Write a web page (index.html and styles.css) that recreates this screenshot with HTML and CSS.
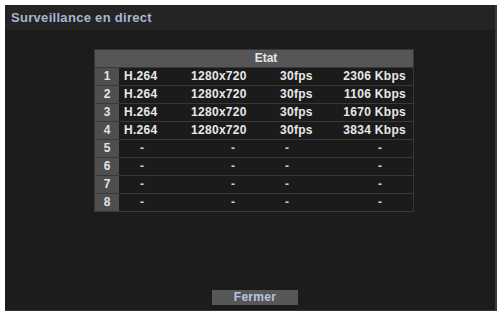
FILE: index.html
```html
<!DOCTYPE html>
<html lang="fr">
<head>
  <meta charset="UTF-8" />
  <title>Surveillance en direct</title>
  <link rel="stylesheet" href="styles.css">
</head>
<body>
  <div class="screen">
    <div class="titlebar">Surveillance en direct</div>

    <div class="content">
      <div class="status-table">
        <div class="head">Etat</div>

        <div class="row">
          <div class="idx">1</div>
          <div class="data">
            <span class="c1">H.264</span><span class="c2">1280x720</span><span class="c3">30fps</span><span class="c4">2306 Kbps</span>
          </div>
        </div>
        <div class="row">
          <div class="idx">2</div>
          <div class="data">
            <span class="c1">H.264</span><span class="c2">1280x720</span><span class="c3">30fps</span><span class="c4">1106 Kbps</span>
          </div>
        </div>
        <div class="row">
          <div class="idx">3</div>
          <div class="data">
            <span class="c1">H.264</span><span class="c2">1280x720</span><span class="c3">30fps</span><span class="c4">1670 Kbps</span>
          </div>
        </div>
        <div class="row">
          <div class="idx">4</div>
          <div class="data">
            <span class="c1">H.264</span><span class="c2">1280x720</span><span class="c3">30fps</span><span class="c4">3834 Kbps</span>
          </div>
        </div>

        <div class="row empty">
          <div class="idx">5</div>
          <div class="data"><span class="c1">-</span><span class="c2">-</span><span class="c3">-</span><span class="c4">-</span></div>
        </div>
        <div class="row empty">
          <div class="idx">6</div>
          <div class="data"><span class="c1">-</span><span class="c2">-</span><span class="c3">-</span><span class="c4">-</span></div>
        </div>
        <div class="row empty">
          <div class="idx">7</div>
          <div class="data"><span class="c1">-</span><span class="c2">-</span><span class="c3">-</span><span class="c4">-</span></div>
        </div>
        <div class="row empty">
          <div class="idx">8</div>
          <div class="data"><span class="c1">-</span><span class="c2">-</span><span class="c3">-</span><span class="c4">-</span></div>
        </div>
      </div>

      <button class="close-btn">Fermer</button>
    </div>
  </div>
</body>
</html>
```

FILE: styles.css
```css
* {
  margin: 0;
  padding: 0;
  box-sizing: border-box;
}

body {
  background: #ffffff;
  font-family: 'Liberation Sans', Arial, sans-serif;
  font-weight: bold;
}

.screen {
  margin: 5px 4px 0 5px;
  width: 492px;
  height: 306px;
  background: #1c1c1c;
  border-right: 2px solid #3a3a3a;
  border-bottom: 1px solid #333333;
  display: flex;
  flex-direction: column;
}

.titlebar {
  height: 25px;
  line-height: 25px;
  padding-left: 6px;
  background: #242424;
  color: #a9b5d2;
  font-size: 13px;
  letter-spacing: 0.3px;
}

.content {
  flex: 1;
  display: flex;
  flex-direction: column;
}

.status-table {
  margin: 19px 0 0 89px;
  width: 320px;
  padding: 1px;
  background: #383838;
  display: flex;
  flex-direction: column;
  gap: 1px;
}

.head {
  height: 17px;
  line-height: 17px;
  padding-left: 24px;
  background: #565656;
  color: #e6e6e6;
  font-size: 12px;
  text-align: center;
}

.row {
  display: flex;
  height: 17px;
}

.idx {
  width: 24px;
  background: #4e4e4e;
  color: #e4e4e4;
  font-size: 12px;
  line-height: 17px;
  text-align: center;
}

.data {
  flex: 1;
  display: flex;
  background: #1b1b1b;
  color: #e8e8e8;
  font-size: 12px;
  line-height: 17px;
  letter-spacing: 0.3px;
  white-space: nowrap;
}

.c1 { width: 52px; padding-left: 5px; }
.c2 { width: 95px; padding-left: 20px; }
.c3 { width: 65px; padding-left: 14px; }
.c4 { width: 82px; padding-right: 7px; text-align: right; }

.empty .data {
  color: #cfcfcf;
}

.empty .c1 { padding-left: 21px; }
.empty .c2 { padding-left: 60px; }
.empty .c3 { padding-left: 19px; }
.empty .c4 { padding-left: 47px; padding-right: 0; text-align: left; }

.close-btn {
  margin: auto 0 5px 207px;
  align-self: flex-start;
  width: 86px;
  height: 15px;
  border: none;
  background: #575757;
  color: #b7c4e2;
  font-family: 'Liberation Sans', Arial, sans-serif;
  font-weight: bold;
  font-size: 12px;
  line-height: 15px;
  letter-spacing: 0.3px;
}
```
